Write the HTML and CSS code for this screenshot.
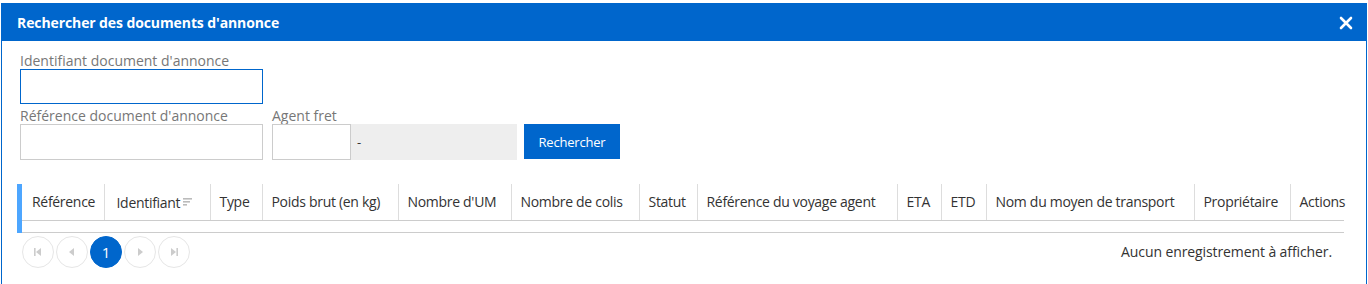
FILE: index.html
```html
<!DOCTYPE html>
<html lang="fr">
<head>
    <meta charset="UTF-8">
    <title>Rechercher des documents d'annonce</title>
    <link rel="stylesheet" href="styles.css">
</head>
<body>
    <div class="modal">
        <header class="modal-header">
            <h1>Rechercher des documents d'annonce</h1>
            <button class="close" aria-label="Fermer">
                <svg width="14" height="14" viewBox="0 0 14 14"><path d="M2 2 L12 12 M12 2 L2 12" stroke="#fff" stroke-width="2.6" stroke-linecap="round"/></svg>
            </button>
        </header>
        <section class="modal-body">
            <div class="field">
                <label for="ident">Identifiant document d'annonce</label>
                <input type="text" id="ident" class="focused">
            </div>
            <div class="row">
                <div class="field">
                    <label for="ref">Référence document d'annonce</label>
                    <input type="text" id="ref">
                </div>
                <div class="field">
                    <label for="agent">Agent fret</label>
                    <div class="agent">
                        <input type="text" id="agent">
                        <span class="agent-name">-</span>
                    </div>
                </div>
                <button class="btn-search">Rechercher</button>
            </div>

            <div class="grid">
                <div class="table-wrap">
                    <table>
                        <colgroup>
                            <col style="width:82px">
                            <col style="width:106px">
                            <col style="width:52px">
                            <col style="width:136px">
                            <col style="width:113px">
                            <col style="width:128px">
                            <col style="width:58px">
                            <col style="width:200px">
                            <col style="width:44px">
                            <col style="width:45px">
                            <col style="width:208px">
                            <col style="width:96px">
                            <col>
                        </colgroup>
                        <thead>
                            <tr>
                                <th>Référence</th>
                                <th class="sortable">Identifiant<span class="sort"><svg width="10" height="10" viewBox="0 0 10 10"><rect x="0" y="1" width="9" height="1.6" fill="#bbb"/><rect x="0" y="4" width="7" height="1.6" fill="#bbb"/><rect x="0" y="7" width="4" height="1.6" fill="#bbb"/></svg></span></th>
                                <th>Type</th>
                                <th>Poids brut (en kg)</th>
                                <th>Nombre d'UM</th>
                                <th>Nombre de colis</th>
                                <th>Statut</th>
                                <th>Référence du voyage agent</th>
                                <th>ETA</th>
                                <th>ETD</th>
                                <th>Nom du moyen de transport</th>
                                <th>Propriétaire</th>
                                <th>Actions</th>
                            </tr>
                        </thead>
                        <tbody>
                            <tr><td colspan="13"></td></tr>
                        </tbody>
                    </table>
                </div>
                <div class="pager">
                    <div class="pages">
                        <span class="page-btn"><svg width="8" height="8" viewBox="0 0 8 8"><rect x="0" y="0" width="1.6" height="8" fill="#ccc"/><path d="M7 0 L2 4 L7 8 Z" fill="#ccc"/></svg></span>
                        <span class="page-btn"><svg width="8" height="8" viewBox="0 0 8 8"><path d="M6 0 L1 4 L6 8 Z" fill="#ccc"/></svg></span>
                        <span class="page-btn active">1</span>
                        <span class="page-btn"><svg width="8" height="8" viewBox="0 0 8 8"><path d="M2 0 L7 4 L2 8 Z" fill="#ccc"/></svg></span>
                        <span class="page-btn"><svg width="8" height="8" viewBox="0 0 8 8"><path d="M1 0 L6 4 L1 8 Z" fill="#ccc"/><rect x="6.4" y="0" width="1.6" height="8" fill="#ccc"/></svg></span>
                    </div>
                    <span class="pager-info">Aucun enregistrement à afficher.</span>
                </div>
            </div>
        </section>
    </div>
</body>
</html>
```

FILE: styles.css
```css
body {
    margin: 0;
    padding: 3px 1px 0;
    font-family: "Open Sans", Arial, sans-serif;
    background: #fff;
    height: 281px;
    overflow: hidden;
}
.modal {
    border: 1px solid #0066cc;
    border-bottom: none;
    height: 300px;
}
.modal-header {
    background-color: #0066cc;
    height: 37px;
    display: flex;
    align-items: center;
    justify-content: space-between;
    padding: 0 12px 0 15px;
}
.modal-header h1 {
    margin: 0;
    color: #fff;
    font-size: 14px;
    font-weight: bold;
    letter-spacing: -0.1px;
}
.close {
    background: none;
    border: none;
    padding: 0;
    width: 16px;
    height: 16px;
    display: flex;
    align-items: center;
    justify-content: center;
    cursor: pointer;
}
.modal-body {
    padding: 11px 22px 0 15px;
}
.field {
    display: flex;
    flex-direction: column;
}
.field label {
    color: #777;
    font-size: 14px;
    line-height: 17px;
    padding-left: 3px;
}
.field input {
    box-sizing: border-box;
    width: 243px;
    height: 35px;
    border: 1px solid #ccc;
    margin: 0 0 0 3px;
    padding: 0 6px;
    font: inherit;
}
.field input.focused {
    border-color: #0066cc;
}
.row {
    display: flex;
    align-items: flex-end;
    gap: 6px;
    margin-top: 3px;
}
.row input {
    height: 36px;
}
.agent {
    display: flex;
    margin-left: 3px;
}
.agent input {
    width: 79px;
    margin: 0;
}
.agent-name {
    box-sizing: border-box;
    width: 166px;
    height: 36px;
    background: #eee;
    display: flex;
    align-items: center;
    padding-left: 6px;
    font-size: 13px;
    color: #333;
}
.btn-search {
    height: 35px;
    width: 96px;
    margin-left: 1px;
    margin-bottom: 1px;
    background-color: #0066cc;
    color: #fff;
    border: none;
    font-family: inherit;
    font-size: 13px;
    letter-spacing: -0.2px;
    cursor: pointer;
}
.grid {
    margin-top: 24px;
    margin-right: 2px;
}
.table-wrap {
    border-left: 5px solid #4da6ff;
    width: 1322px;
}
table {
    border-collapse: collapse;
    width: 1322px;
    table-layout: fixed;
}
th {
    box-sizing: border-box;
    font-weight: normal;
    font-size: 14px;
    letter-spacing: -0.3px;
    color: #333;
    text-align: left;
    white-space: nowrap;
    padding: 0 0 0 9px;
    height: 36px;
    border-left: 1px solid #ddd;
    border-bottom: 1px solid #ccc;
}
th:first-child {
    border-left: none;
    padding-left: 10px;
}
th.sortable {
    padding-left: 12px;
}
.sort {
    margin-left: 3px;
    vertical-align: 1px;
}
td {
    height: 11px;
    padding: 0;
    border-bottom: 1px solid #ccc;
}
.pager {
    display: flex;
    align-items: center;
    justify-content: space-between;
    padding: 3px 10px 0 5px;
}
.pages {
    display: flex;
    gap: 2px;
}
.page-btn {
    box-sizing: border-box;
    width: 32px;
    height: 32px;
    border: 1px solid #e6e6e6;
    border-radius: 50%;
    display: flex;
    align-items: center;
    justify-content: center;
    font-size: 15px;
}
.page-btn.active {
    background-color: #0066cc;
    border-color: #0066cc;
    color: #fff;
}
.pager-info {
    font-size: 14px;
    color: #333;
    letter-spacing: -0.1px;
}
```
